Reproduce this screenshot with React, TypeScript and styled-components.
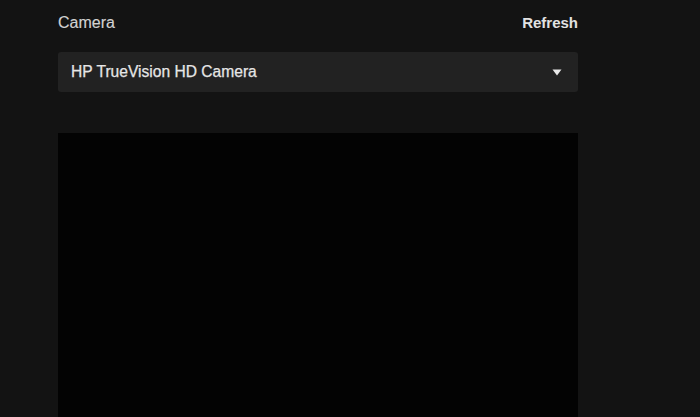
import React from "react";
import styled, { createGlobalStyle } from "styled-components";

const GlobalStyle = createGlobalStyle`
  html, body {
    margin: 0;
    padding: 0;
    background: #131313;
    overflow: hidden;
  }
  body {
    font-family: "Liberation Sans", Arial, sans-serif;
  }
`;

export default function App() {
  return (
    <>
      <GlobalStyle />
      <Page>
        <Panel>
          <Header>
            <Label>Camera</Label>
            <RefreshButton>Refresh</RefreshButton>
          </Header>

          <Select>
            <SelectText>HP TrueVision HD Camera</SelectText>
            <Caret viewBox="0 0 10 7" aria-hidden>
              <path d="M0.5 0.5 L9.5 0.5 L5 6.5 Z" fill="#e8e8e8" />
            </Caret>
          </Select>

          <Preview />
        </Panel>
      </Page>
    </>
  );
}

const Page = styled.div`
  height: 100vh;
  padding: 13px 0 0 58px;
  box-sizing: border-box;
  overflow: hidden;
`;

const Panel = styled.div`
  width: 520px;
  display: flex;
  flex-direction: column;
`;

const Header = styled.div`
  display: flex;
  align-items: center;
  justify-content: space-between;
  height: 20px;
`;

const Label = styled.span`
  font-size: 16px;
  color: #d2d2d2;
  line-height: 20px;
  -webkit-text-stroke: 0.15px #d2d2d2;
`;

const RefreshButton = styled.button`
  background: none;
  border: none;
  padding: 0;
  font-family: inherit;
  font-size: 15px;
  font-weight: bold;
  color: #e2e2e2;
  line-height: 20px;
  cursor: pointer;
`;

const Select = styled.div`
  margin-top: 19px;
  height: 40px;
  background: #222222;
  border-radius: 3px;
  display: flex;
  align-items: center;
  justify-content: space-between;
  padding: 0 16px 0 13px;
`;

const SelectText = styled.span`
  font-size: 15.6px;
  color: #e6e6e6;
  -webkit-text-stroke: 0.25px #e6e6e6;
`;

const Caret = styled.svg`
  width: 10px;
  height: 7px;
`;

const Preview = styled.div`
  margin-top: 41px;
  height: 284px;
  background: #030303;
`;
